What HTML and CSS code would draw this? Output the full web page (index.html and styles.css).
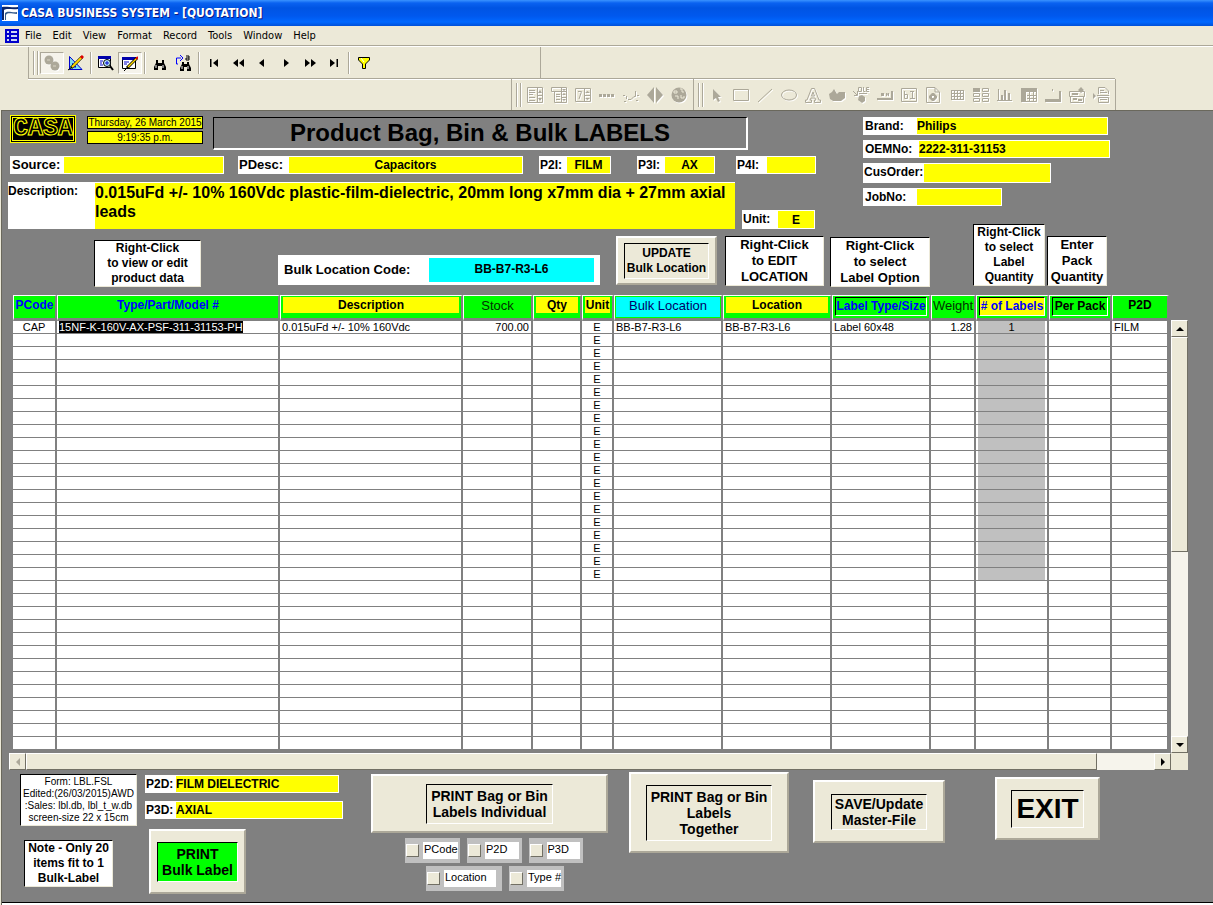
FILE: index.html
```
<!DOCTYPE html>
<html lang="en">
<head>
<meta charset="utf-8">
<title>CASA BUSINESS SYSTEM - [QUOTATION]</title>
<link rel="stylesheet" href="styles.css">
</head>
<body>
<header class="titlebar">
  <svg class="app-icon" viewBox="0 0 16 16"><rect width="16" height="16" fill="#fff"/><path d="M0 2C5 1 10 3 16 2V4C10 5 5 3 2 5V15H0Z" fill="#0a246a"/><path d="M3 8C6 5 10 8 15 7V9C10 9 6 7 4 10V15H3Z" fill="#345a8c"/></svg>
  <h1>CASA BUSINESS SYSTEM - [QUOTATION]</h1>
</header>
<nav class="menubar">
  <svg class="menu-icon" viewBox="0 0 14 14"><rect width="14" height="14" fill="#00c"/><path d="M2 2H4V4H2ZM2 6H4V8H2ZM2 10H4V12H2ZM6 2H12V4H6ZM6 6H12V8H6ZM6 10H12V12H6Z" fill="#cdd8f4"/></svg>
  <button type="button">File</button><button type="button">Edit</button><button type="button">View</button><button type="button">Format</button><button type="button">Record</button><button type="button">Tools</button><button type="button">Window</button><button type="button">Help</button>
</nav>
<div class="toolbars">
  <div class="bar bar-main">
    <span class="grip"></span>
    <button type="button" class="tool pressed off" aria-label="Run"><svg viewBox="0 0 16 16"><circle cx="5" cy="5" r="4.500"/><circle cx="11" cy="11" r="4.500"/><path d="M3 5H6M9 11H12" stroke="#d8d4c4"/></svg></button>
    <button type="button" class="tool" aria-label="Design"><svg viewBox="0 0 16 16"><path d="M1.500 1.500L14 14.500H1.500Z" fill="#7fe0f0" stroke="#00c"/><path d="M4.500 8.500L8 12H4.500Z" fill="#ece9d8" stroke="#00c"/><path d="M14 2L3 13" stroke="#000" stroke-width="3"/><path d="M14 2L4 12" stroke="#fd0" stroke-width="2"/><path d="M15 1L13 3" stroke="#d00" stroke-width="3"/><path d="M0 15L3 13" stroke="#000"/></svg></button>
    <span class="sep"></span>
    <button type="button" class="tool" aria-label="Table view"><svg viewBox="0 0 16 16"><path d="M.5 1.500H12.500V12.500H.5Z" fill="#fff" stroke="#000"/><path d="M0 1H13V4H0Z" fill="#00a"/><path d="M2 6H5M2 8H4M2 10H5" stroke="#00c"/><circle cx="9" cy="8" r="3.500" fill="#bfefff" stroke="#000"/><path d="M9 6V10M7 8H11" stroke="#00c"/><path d="M12 11L15 15" stroke="#000" stroke-width="2"/></svg></button>
    <button type="button" class="tool pressed" aria-label="Edit data"><svg viewBox="0 0 16 16"><path d="M.5 2.500H13.500V13.500H.5Z" fill="#fff" stroke="#000"/><path d="M0 2H14V5H0Z" fill="#00a"/><path d="M2 7H7M2 9H5" stroke="#00c"/><path d="M15 3L5 13" stroke="#000" stroke-width="3"/><path d="M15 3L6 12" stroke="#fd0" stroke-width="1.500"/><path d="M16 2L14 4" stroke="#d00" stroke-width="2"/><path d="M2 16L5 13" stroke="#000"/></svg></button>
    <span class="sep"></span>
    <button type="button" class="tool" aria-label="Locate"><svg viewBox="0 0 16 16"><path d="M4 5H6V8H10V5H12V8L14 12V15H10V11H6V15H2V12L4 8Z"/><path d="M4 10V13M11 10V13" stroke="#fff"/></svg></button>
    <button type="button" class="tool" aria-label="Locate next"><svg viewBox="0 0 16 16"><path d="M6 7H8V9H11V7H13V9L15 13V16H11V12H8V16H4V13L6 9Z"/><path d="M6 11V14M12 11V14" stroke="#fff"/><path d="M2 9H0.500V3H5M4 0L7 3L4 6" fill="none" stroke="#00f"/><path d="M10 1H13V5H10V3H13" fill="none" stroke="#000"/></svg></button>
    <span class="sep"></span>
    <button type="button" class="tool" aria-label="First record"><svg viewBox="0 0 16 16"><path d="M4 4H5.500V12H4ZM12 4V12L7 8Z"/></svg></button>
    <button type="button" class="tool" aria-label="Previous set"><svg viewBox="0 0 16 16"><path d="M8 4V12L3 8ZM14 4V12L9 8Z"/></svg></button>
    <button type="button" class="tool" aria-label="Previous record"><svg viewBox="0 0 16 16"><path d="M10 4V12L5 8Z"/></svg></button>
    <button type="button" class="tool" aria-label="Next record"><svg viewBox="0 0 16 16"><path d="M6 4V12L11 8Z"/></svg></button>
    <button type="button" class="tool" aria-label="Next set"><svg viewBox="0 0 16 16"><path d="M3 4V12L8 8ZM9 4V12L14 8Z"/></svg></button>
    <button type="button" class="tool" aria-label="Last record"><svg viewBox="0 0 16 16"><path d="M4 4V12L9 8ZM10.500 4H12V12H10.500Z"/></svg></button>
    <span class="sep"></span>
    <button type="button" class="tool" aria-label="Filter"><svg viewBox="0 0 16 16"><path d="M2.500 2.500H13.500V5L9.500 9V13.500H6.500V9L2.500 5Z" fill="#ff0" stroke="#000"/><path d="M5 3L8 7" stroke="#fff"/></svg></button>
  </div>
  <div class="bar bar-objects">
    <div class="bar-group">
      <span class="grip"></span>
      <button type="button" class="tool off" aria-label="List"><svg viewBox="0 0 16 16"><path d="M.5.500H15.500V15.500H.5ZM10.500 0V16M10 8.500H16M2 3.500H8M2 5.500H8M2 7.500H6M2 10.500H8M2 13.500H8" fill="none" stroke="#aca899"/><path d="M13 3L15 6H11ZM11 11H15L13 14Z"/></svg></button>
      <button type="button" class="tool off" aria-label="Drop-down"><svg viewBox="0 0 16 16"><path d="M.5.500H15.500V4.500H.5ZM3.500 4V15.500H15.500V4M10.500 0V16M5 7.500H9M5 9.500H9M5 12.500H9M10 10.500H16" fill="none" stroke="#aca899"/><path d="M11 2H15L13 4ZM13 6L15 8H11ZM11 12H15L13 14Z"/></svg></button>
      <button type="button" class="tool off" aria-label="Spin edit"><svg viewBox="0 0 16 16"><path d="M.5 1.500H15.500V14.500H.5ZM9.500 1V15M9 8.500H16M3 4.500H6.500L4 12" fill="none" stroke="#aca899"/><path d="M12.500 4L15 6H10ZM10 11H15L12.500 13Z"/></svg></button>
      <button type="button" class="tool off" aria-label="Gauge"><svg viewBox="0 0 16 16"><path d="M0 7H3V10H0ZM4 7H7V10H4ZM8 7H11V10H8ZM12 7H15V10H12Z"/></svg></button>
      <button type="button" class="tool off" aria-label="Meter"><svg viewBox="0 0 16 16"><path d="M0 8.500H2M3.500 9V12M5 12.500H8L11 9.500H12.500V4M14 8.500H16M13 13.500H15M1 14.500H3" fill="none" stroke="#aca899"/></svg></button>
      <button type="button" class="tool off" aria-label="Navigator"><svg viewBox="0 0 16 16"><path d="M7 0V16L0 8ZM9 0V16L16 8Z"/></svg></button>
      <button type="button" class="tool off" aria-label="Web"><svg viewBox="0 0 16 16"><circle cx="8" cy="8" r="7.500"/><path d="M3 4H6V6H3ZM9 2H11V5H13M4 9H7V12M10 8V11H13V9" fill="none" stroke="#ece9d8"/></svg></button>
    </div>
    <div class="bar-group">
      <span class="grip"></span>
      <button type="button" class="tool off" aria-label="Select"><svg viewBox="0 0 16 16"><path d="M4 2L12 10H9L11 14L9 15L7 11L4 13Z"/></svg></button>
      <button type="button" class="tool off" aria-label="Box"><svg viewBox="0 0 16 16"><path d="M.5 2.500H15.500V13.500H.5Z" fill="none" stroke="#aca899"/></svg></button>
      <button type="button" class="tool off" aria-label="Line"><svg viewBox="0 0 16 16"><path d="M1 15L15 2" stroke="#aca899"/></svg></button>
      <button type="button" class="tool off" aria-label="Ellipse"><svg viewBox="0 0 16 16"><ellipse cx="8" cy="8" rx="7.500" ry="5" fill="none" stroke="#aca899"/></svg></button>
      <button type="button" class="tool off" aria-label="Text"><svg viewBox="0 0 16 16"><path d="M6.500 1.500H9.500L14 13H15.500V15.500H9.500V13H11L10 11H6L5 13H6.500V15.500H.5V13H2ZM8 5L6.500 9H9.500Z" fill="none" stroke="#aca899"/></svg></button>
      <button type="button" class="tool off" aria-label="Graphic"><svg viewBox="0 0 16 16"><path d="M0 7L3 5L5 2L8 7L10 5H16V11L12 14H4L1 12Z"/></svg></button>
      <button type="button" class="tool off" aria-label="OLE"><svg viewBox="0 0 16 16"><path d="M5.500.500H8.500V4.500H5.500ZM10.500 0V4.500H12.500M16 .5H13.500V4.500H16M13 2.500H16M0 4L4 8M4.500 4V8.500H1M6 6.500H14" fill="none" stroke="#aca899"/><path d="M6 9L9 8L12 10V14L9 16L5 13Z"/></svg></button>
      <button type="button" class="tool off" aria-label="Button"><svg viewBox="0 0 16 16"><path d="M0 11H14V4H16V13H0ZM4 6H7V9H4ZM9 6V9H10V7L11 9H12V6H11L10 7V6Z"/></svg></button>
      <button type="button" class="tool off" aria-label="Field"><svg viewBox="0 0 16 16"><path d="M.5 1.500H15.500V14.500H.5ZM3.500 4V11.500H6.500V7.500H4M9 4.500H13M11.500 4V12M9 11.500H14" fill="none" stroke="#aca899"/></svg></button>
      <button type="button" class="tool off" aria-label="Record object"><svg viewBox="0 0 16 16"><path d="M1.500.500H10L14.500 5V15.500H1.500ZM10 1V5H14" fill="none" stroke="#aca899"/><path d="M7 6H9L12 9V11L9 14H7L4 11V9ZM7 9V11H9V9Z" fill-rule="evenodd"/></svg></button>
      <button type="button" class="tool off" aria-label="Table frame"><svg viewBox="0 0 16 16"><path d="M2 3.500H15M2 6.500H15M2 9.500H15M2 12.500H15M2.500 3V13M5.500 3V13M8.500 3V13M11.500 3V13M14.500 3V13" stroke="#aca899"/></svg></button>
      <button type="button" class="tool off" aria-label="Multi-record"><svg viewBox="0 0 16 16"><path d="M0 1H7V5H0Z"/><path d="M9.500 1.500H15.500V4.500H9.500ZM.5 6.500H6.500V9.500H.5ZM9.500 6.500H15.500V9.500H9.500ZM.5 11.500H6.500V14.500H.5ZM9.500 11.500H15.500V14.500H9.500Z" fill="none" stroke="#aca899"/></svg></button>
      <button type="button" class="tool off" aria-label="Chart"><svg viewBox="0 0 16 16"><path d="M1.500 2V13M0 13.500H15" stroke="#aca899"/><path d="M4 8H6V13H4ZM7 3H9V13H7ZM11 6H13V13H11Z"/></svg></button>
      <button type="button" class="tool off" aria-label="Crosstab"><svg viewBox="0 0 16 16"><path d="M0 1H16V5H5V15H0Z"/><path d="M5 14.500H15.500V5M6 8.500H15M6 11.500H15M8.500 5V15M12.500 5V15" fill="none" stroke="#aca899"/></svg></button>
      <button type="button" class="tool off" aria-label="Notebook"><svg viewBox="0 0 16 16"><path d="M0 12H14V4H16V15H0ZM7 2H8V4H7Z"/></svg></button>
      <button type="button" class="tool off" aria-label="Crate"><svg viewBox="0 0 16 16"><path d="M.5 4.500H15.500V9.500H.5ZM1.500 9.500H14.500V15.500H1.500Z" fill="none" stroke="#aca899"/><path d="M9 3L12 0L15 3L12 6ZM3 6H9V8H3ZM4 11H8V13H4ZM9 12H13V14H9Z"/></svg></button>
      <button type="button" class="tool off" aria-label="Page break"><svg viewBox="0 0 16 16"><path d="M5.500 7V.5H12L15.500 4V7M5.500 15.500V10.500H15.500V15.500ZM7 3.500H11M7 5.500H14M4 8.500H16M7 12.500H14" fill="none" stroke="#aca899"/><path d="M0 6L3 9L0 12Z"/></svg></button>
    </div>
  </div>
</div>

<main class="form">
  <section class="top">
    <div class="top-left">
      <div class="heading">
        <div class="logo">CASA</div>
        <div class="clock"><time>Thursday, 26 March 2015</time><time>9:19:35 p.m.</time></div>
        <h2>Product Bag, Bin &amp; Bulk LABELS</h2>
      </div>
      <div class="codes">
        <div class="field w-source"><label for="source">Source:</label><input id="source"></div>
        <div class="field w-pdesc"><label for="pdesc">PDesc:</label><input id="pdesc" class="mid" value="Capacitors"></div>
        <div class="field w-p2i"><label for="p2i">P2I:</label><input id="p2i" class="mid" value="FILM"></div>
        <div class="field w-p3i"><label for="p3i">P3I:</label><input id="p3i" class="mid" value="AX"></div>
        <div class="field w-p4i"><label for="p4i">P4I:</label><input id="p4i"></div>
      </div>
      <div class="describe">
        <div class="field big"><label for="desc">Description:</label><textarea id="desc">0.015uFd +/- 10% 160Vdc plastic-film-dielectric, 20mm long x7mm dia + 27mm axial leads</textarea></div>
        <div class="field w-unit"><label for="unit">Unit:</label><input id="unit" class="mid" value="E"></div>
      </div>
    </div>
    <div class="top-right">
      <div class="field w-brand"><label for="brand">Brand:</label><input id="brand" value="Philips"></div>
      <div class="field w-oem"><label for="oem">OEMNo:</label><input id="oem" value="2222-311-31153"></div>
      <div class="field w-cus"><label for="cus">CusOrder:</label><input id="cus"></div>
      <div class="field w-job"><label for="job">JobNo:</label><input id="job"></div>
    </div>
  </section>

  <section class="hints">
    <p class="note h-view">Right-Click<br>to view or edit<br>product data</p>
    <div class="bulk"><label for="bulk">Bulk Location Code:</label><input id="bulk" value="BB-B7-R3-L6"></div>
    <button type="button" class="raised h-update"><span>UPDATE<br>Bulk Location</span></button>
    <p class="note tall h-edit">Right-Click<br>to EDIT<br>LOCATION</p>
    <p class="note tall h-option">Right-Click<br>to select<br>Label Option</p>
    <p class="note h-qty">Right-Click<br>to select<br>Label<br>Quantity</p>
    <p class="note tall h-pack">Enter<br>Pack<br>Quantity</p>
  </section>

  <section class="sheet">
    <table class="grid">
      <colgroup><col class="c44"><col><col class="c183"><col class="c70"><col class="c49"><col class="c32"><col class="c109"><col class="c109"><col class="c99"><col class="c45"><col class="c73"><col class="c63"><col class="c57"></colgroup>
      <thead><tr>
        <th class="blue">PCode</th><th class="blue">Type/Part/Model #</th><th><span class="yel">Description</span></th><th class="plain">Stock</th><th><span class="yel">Qty</span></th><th><span class="yel">Unit</span></th><th class="plain cyan">Bulk Location</th><th><span class="yel">Location</span></th><th class="blue"><span class="sunk">Label Type/Size</span></th><th class="plain">Weight</th><th class="blue"><span class="sunk fill"># of Labels</span></th><th><span class="sunk">Per Pack</span></th><th>P2D</th>
      </tr></thead>
      <tbody id="rows"></tbody>
    </table>
    <div class="vbar"><button type="button" aria-label="Scroll up"><svg viewBox="0 0 8 8"><path d="M0 6H8L4 2Z"/></svg></button><span class="thumb"></span><span class="track"></span><button type="button" aria-label="Scroll down"><svg viewBox="0 0 8 8"><path d="M0 2H8L4 6Z"/></svg></button></div>
    <div class="hbar"><button type="button" disabled aria-label="Scroll left"><svg viewBox="0 0 8 8"><path d="M6 0V8L2 4Z"/></svg></button><span class="thumb"></span><span class="track"></span><button type="button" aria-label="Scroll right"><svg viewBox="0 0 8 8"><path d="M2 0V8L6 4Z"/></svg></button></div>
    <span class="corner"></span>
  </section>

  <section class="bottom">
    <div class="notes">
      <p class="note small">Form: LBL.FSL<br>Edited:(26/03/2015)AWD<br>:Sales: lbl.db, lbl_t_w.db<br>screen-size 22 x 15cm</p>
      <p class="note limit">Note - Only 20<br>items fit to 1<br>Bulk-Label</p>
    </div>
    <div class="types">
      <div class="field w-p2d"><label for="p2d">P2D:</label><input id="p2d" value="FILM DIELECTRIC"></div>
      <div class="field w-p3d"><label for="p3d">P3D:</label><input id="p3d" value="AXIAL"></div>
      <button type="button" class="raised b-bulk"><span class="green">PRINT<br>Bulk Label</span></button>
    </div>
    <div class="single">
      <button type="button" class="raised b-single"><span>PRINT Bag or Bin<br>Labels Individual</span></button>
      <div class="checks">
        <label class="check"><input type="checkbox"><span>PCode</span></label>
        <label class="check"><input type="checkbox"><span>P2D</span></label>
        <label class="check"><input type="checkbox"><span>P3D</span></label>
      </div>
      <div class="checks">
        <label class="check wide"><input type="checkbox"><span>Location</span></label>
        <label class="check"><input type="checkbox"><span>Type #</span></label>
      </div>
    </div>
    <button type="button" class="raised b-together"><span>PRINT Bag or Bin<br>Labels<br>Together</span></button>
    <button type="button" class="raised b-save"><span>SAVE/Update<br>Master-File</span></button>
    <button type="button" class="raised b-exit"><span>EXIT</span></button>
  </section>
</main>
<script src="rows.js"></script>
</body>
</html>
```

FILE: styles.css
```
* { box-sizing: border-box; }
body {
  margin: 0;
  min-height: 100vh;
  display: flex;
  flex-direction: column;
  background: #ece9d8;
  color: #000;
  font: bold 13px/15px "Liberation Sans", Arial, sans-serif;
}
button, input, textarea { font: inherit; color: inherit; border-radius: 0; }
h1, h2, p { margin: 0; }

/* window chrome */
.titlebar {
  height: 26px;
  display: flex;
  align-items: center;
  gap: 3px;
  padding: 0 2px;
  background: linear-gradient(#3a93ff 0, #0a62f0 3px, #0054e3 8px, #0058ee 16px, #0068ff 22px, #0050d8 26px);
}
.app-icon { width: 16px; height: 16px; }
.titlebar h1 {
  color: #fff;
  font: bold 12px/16px "DejaVu Sans Condensed", "DejaVu Sans", sans-serif;
  text-shadow: 1px 1px 0 #0a1883;
}
.menubar {
  height: 20px;
  display: flex;
  align-items: center;
  padding: 0 5px;
  border-bottom: 1px solid #aca899;
}
.menu-icon { width: 14px; height: 14px; margin-right: 1px; }
.menubar button {
  border: 0;
  background: none;
  padding: 0 6px 0 5px;
  font: 11px/16px "DejaVu Sans Condensed", "DejaVu Sans", sans-serif;
}
.toolbars { border-top: 1px solid #fff; }
.bar { display: flex; height: 31px; }
.bar-main {
  width: 513px;
  margin-left: 28px;
  padding-left: 4px;
  align-items: center;
  border-left: 1px solid #aca899;
  border-right: 1px solid #aca899;
}
.bar-objects {
  height: 32px;
  margin: 0 98px 0 28px;
  padding-left: 483px;
  border-top: 1px solid #aca899;
  box-shadow: inset 0 1px #fff;
}
.bar-group {
  display: flex;
  align-items: center;
  padding: 0 2px 0 4px;
  border-left: 1px solid #aca899;
}
.bar-group + .bar-group { padding-left: 4px; border-right: 1px solid #aca899; }
.grip {
  width: 5px;
  height: 24px;
  margin-right: 2px;
  border: solid #aca899;
  border-width: 0 1px;
  box-shadow: 1px 0 #fff, inset 1px 0 #fff;
}
.sep { width: 6px; height: 22px; background: linear-gradient(90deg, transparent 2px, #aca899 2px 3px, #fff 3px 4px, transparent 4px); }
.tool {
  flex: none;
  width: 24px;
  height: 22px;
  padding: 0;
  border: 1px solid transparent;
  background: none;
  display: grid;
  place-items: center;
}
.tool svg { width: 16px; height: 16px; }
.pressed { border-color: #aca899 #fff #fff #aca899; background: #f5f3eb; }
.off svg { fill: #aca899; filter: drop-shadow(1px 1px 0 #fff); }

/* form */
.form {
  flex: 1;
  margin-left: 1px;
  padding: 4px 25px 8px 6px;
  background: #808080;
  border: solid #6a685c;
  border-width: 1px 0 0 1px;
  box-shadow: inset 0 -2px #fff, inset 0 -3px #000;
}
.top { display: flex; align-items: flex-start; gap: 33px; }
.top-left { width: 822px; }
.heading { display: flex; align-items: flex-start; padding-left: 2px; }
.logo {
  width: 66px;
  height: 28px;
  border: 1px solid #ff0;
  background: #000;
  box-shadow: inset 0 0 0 1px #000, inset 0 0 0 2px #ff0;
  color: #000;
  font: bold 25px/26px "Liberation Mono", monospace;
  text-align: center;
  -webkit-text-stroke: 1px #ff0;
}
.clock { display: grid; gap: 2px; margin: 1px 10px 0 11px; width: 116px; }
.clock time {
  border: 1px solid #000;
  background: #ff0;
  font: 10px/11px "Liberation Sans", sans-serif;
  text-align: center;
  white-space: nowrap;
}
.heading h2 {
  width: 535px;
  margin-top: 2px;
  border: solid;
  border-width: 1px 2px 2px 1px;
  border-color: #000 #fff #fff #000;
  font: bold 24px/30px "Liberation Sans", sans-serif;
  text-align: center;
}
.codes { display: flex; align-items: center; margin-top: 6px; padding-left: 2px; }
.field { display: flex; background: #fff; border: 1px solid #fff; height: 18px; }
.field label { flex: none; line-height: 16px; white-space: nowrap; }
.field input {
  flex: 1;
  min-width: 0;
  height: 100%;
  border: 0;
  padding: 0;
  background: #ff0;
  font-size: 12px;
}
.field .mid { text-align: center; }
.w-source { width: 214px; margin-right: 14px; }
.w-source label { width: 53px; padding-left: 1px; }
.w-pdesc { width: 285px; margin-right: 16px; }
.w-pdesc label { width: 50px; }
.w-p2i { width: 72px; margin-right: 26px; }
.w-p3i { width: 78px; margin-right: 21px; }
.w-p4i { width: 80px; }
.w-p2i label, .w-p3i label { width: 27px; }
.w-p4i label { width: 30px; }
.w-p2i label, .w-p3i label, .w-p4i label { font-size: 12px; }
.describe { display: flex; align-items: flex-end; gap: 7px; margin-top: 8px; }
.big { width: 727px; height: 47px; border-width: 1px 0 0; }
.big label { width: 87px; font-size: 12px; }
.big textarea {
  flex: 1;
  border: 0;
  padding: 0;
  resize: none;
  overflow: hidden;
  background: #ff0;
  font-size: 16px;
  line-height: 19px;
}
.w-unit { width: 73px; height: 19px; }
.w-unit label { width: 35px; font-size: 12px; }
.top-right { display: flex; flex-direction: column; gap: 5px; padding-top: 2px; }
.top-right label { width: 53px; font-size: 12px; padding-left: 1px; }
.w-brand { width: 245px; }
.w-oem { width: 247px; }
.top-right .w-oem label { width: 55px; }
.w-cus { width: 188px; height: 20px; }
.top-right .w-cus label { width: 60px; padding: 0; }
.w-job { width: 139px; }

.note {
  padding: 0 1px;
  background: #fff;
  border: 1px solid;
  border-color: #000 #ece9d8 #ece9d8 #000;
  text-align: center;
  white-space: nowrap;
  font-size: 12px;
  line-height: 15px;
}
.tall { font-size: 13px; line-height: 16px; }
.hints { display: flex; align-items: flex-end; margin: -5px 0 8px; padding-left: 86px; }
.h-view { width: 107px; margin-right: 77px; }
.bulk {
  display: flex;
  align-items: center;
  width: 322px;
  height: 30px;
  margin: 0 16px 2px 0;
  padding: 0 6px;
  background: #fff;
}
.bulk label { width: 145px; line-height: 24px; }
.bulk input { flex: 1; min-width: 0; height: 24px; border: 0; padding: 0 0 3px; background: #0ff; text-align: center; font-size: 12px; }
.raised {
  display: grid;
  place-items: center;
  padding: 0;
  background: #ece9d8;
  border: 2px solid;
  border-color: #fff #aca899 #aca899 #fff;
  white-space: nowrap;
  font-size: 14px;
}
.raised span { border: 1px solid; border-color: #000 #fff #fff #000; padding: 3px 4px; line-height: 16px; }
.raised.h-update { width: 101px; height: 49px; margin: 0 8px 2px 0; font-size: 12px; }
.h-update span { line-height: 15px; padding: 2px; }
.h-edit { width: 99px; margin: 0 6px 1px 0; }
.h-option { width: 100px; margin-right: 43px; }
.h-qty { width: 72px; margin: 0 2px 1px 0; }
.h-pack { width: 60px; margin-bottom: 1px; }

/* record sheet */
.sheet { display: grid; grid-template-columns: 1fr 17px; margin-left: 1px; }
.grid { width: calc(100% - 6px); margin: 0 2px 3px 4px; table-layout: fixed; border-collapse: separate; border-spacing: 0; }
.c44 { width: 44px; }
.c183 { width: 183px; }
.c70 { width: 70px; }
.c49 { width: 49px; }
.c32 { width: 32px; }
.c109 { width: 109px; }
.c99 { width: 99px; }
.c45 { width: 45px; }
.c73 { width: 73px; }
.c63 { width: 63px; }
.c57 { width: 57px; }
.grid th {
  height: 26px;
  padding: 0;
  background: #0f0 padding-box;
  border: solid;
  border-width: 1px 2px 3px 1px;
  border-color: #fff #808080 #808080 #fff;
  vertical-align: top;
  font-size: 12px;
  line-height: 19px;
  white-space: nowrap;
}
.grid th.blue { color: #00f; }
.grid th.plain { font-weight: normal; font-size: 13px; color: #030; }
.grid th.cyan { background-color: #0ff; color: #006; box-shadow: inset 0 0 0 1px #0f0; }
.grid th span { display: block; }
.yel { margin: 1px 2px 0; background: #ff0; line-height: 16px; }
.sunk { margin: 1px 2px 0; line-height: 17px; border: 1px solid; border-color: #000 #fff #fff #000; }
.fill { background: #ff0; }
.grid td {
  height: 13px;
  padding: 0 2px;
  background: #fff padding-box;
  border: solid #808080;
  border-width: 0 2px 1px 0;
  font: 11px/12px "Liberation Sans", sans-serif;
  white-space: nowrap;
  overflow: hidden;
}
.grid tbody tr:first-child td { height: 13px; }
.grid td.mid { text-align: center; }
.grid td.end { text-align: right; }
.grid td.gray { background: #c0c0c0 padding-box; box-shadow: inset 2px 0 #fff, inset -2px 0 #fff; }
.grid mark { background: #000; color: #fff; }
.vbar { display: flex; flex-direction: column; margin-top: 25px; background: #f6f4ec; }
.hbar { display: flex; height: 17px; background: #f6f4ec; }
.vbar button, .hbar button {
  flex: none;
  width: 17px;
  height: 17px;
  padding: 0;
  display: grid;
  place-items: center;
  background: #ece9d8;
  border: 1px solid;
  border-color: #fff #716f64 #716f64 #fff;
}
.vbar svg, .hbar svg { width: 8px; height: 8px; }
.hbar button:disabled svg { fill: #aca899; }
.thumb { background: #ece9d8; border: 1px solid; border-color: #fff #716f64 #716f64 #fff; }
.vbar .thumb { flex: 215; }
.vbar .track { flex: 186; }
.hbar .thumb { flex: 1073; }
.hbar .track { flex: 57; }
.corner { background: #ece9d8; }

/* actions */
.bottom { display: flex; align-items: flex-start; padding: 2px 0 0 12px; }
.notes { width: 125px; padding-top: 2px; }
.small { width: 117px; margin-bottom: 14px; font: 10px/12px "Liberation Sans", sans-serif; padding: 1px; }
.limit { width: 89px; margin-left: 4px; }
.types { width: 226px; padding-top: 3px; }
.types .field { margin-bottom: 8px; font-size: 12px; }
.types label { width: 30px; }
.w-p2d { width: 194px; }
.w-p3d { width: 198px; }
.b-bulk { width: 97px; height: 65px; margin: 10px 0 0 4px; }
.raised .green { background: #0f0; }
.single { width: 258px; padding-top: 2px; }
.b-single { width: 237px; height: 59px; margin-bottom: 5px; }
.checks { display: flex; gap: 7px; width: 237px; padding: 0 25px 0 34px; margin-bottom: 3px; }
.checks + .checks { padding-left: 55px; }
.check {
  display: flex;
  align-items: center;
  gap: 4px;
  width: 55px;
  height: 25px;
  padding: 0 3px 0 1px;
  background: #c0c0c0;
  font: 11px/15px "Liberation Sans", sans-serif;
  white-space: nowrap;
}
.check.wide { width: 76px; padding-right: 6px; }
.check span { flex: 1; height: 17px; padding-left: 1px; background: #fff; }
.check input {
  appearance: none;
  flex: none;
  width: 13px;
  height: 13px;
  margin: 0;
  background: #ece9d8;
  border: 1px solid;
  border-color: #fff #716f64 #716f64 #fff;
}
.b-together { width: 160px; height: 81px; margin-right: 24px; }
.b-save { width: 132px; height: 63px; margin: 8px 50px 0 0; }
.b-save span { padding: 1px 3px; }
.b-exit { width: 105px; height: 63px; margin-top: 5px; }
.b-exit span { font-size: 28px; line-height: 30px; }
```

FILE: rows.js
```
const ROWS = 33;
const ITEMS = 20;
const first = ['CAP', '<mark>15NF-K-160V-AX-PSF-311-31153-PH</mark>', '0.015uFd +/- 10% 160Vdc', '700.00', '', 'E', 'BB-B7-R3-L6', 'BB-B7-R3-L6', 'Label 60x48', '1.28', '1', '', 'FILM'];
const align = ['mid', '', '', 'end', '', 'mid', '', '', '', 'end', 'mid', '', ''];
let html = '';
for (let r = 0; r < ROWS; r++) {
  html += '<tr>' + first.map((text, c) => {
    const value = r === 0 ? text : (c === 5 && r < ITEMS ? 'E' : '');
    const gray = c === 10 && r < ITEMS ? ' gray' : '';
    return `<td class="${align[c]}${gray}">${value}</td>`;
  }).join('') + '</tr>';
}
document.getElementById('rows').innerHTML = html;
```
